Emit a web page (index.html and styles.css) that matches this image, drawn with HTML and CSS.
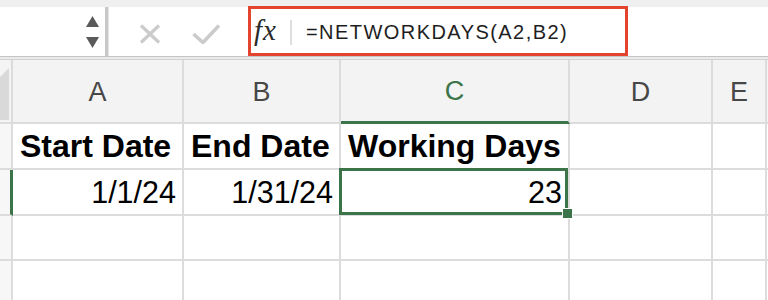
FILE: index.html
```html
<!DOCTYPE html>
<html>
<head>
<meta charset="utf-8">
<link rel="stylesheet" href="styles.css">
</head>
<body>
<div class="toolbar">
  <div class="namebox">
    <div class="spinner">
      <svg class="arrow" width="13" height="11" viewBox="0 0 13 11"><polygon points="6.5,0 13,11 0,11"/></svg>
      <svg class="arrow down" width="13" height="11" viewBox="0 0 13 11"><polygon points="0,0 13,0 6.5,11"/></svg>
    </div>
  </div>
  <div class="gap"></div>
  <div class="formula-area">
    <svg class="icon-x" width="22" height="20" viewBox="0 0 22 20"><path d="M2 1.5 L20 18.5 M20 1.5 L2 18.5"/></svg>
    <svg class="icon-check" width="28" height="20" viewBox="0 0 28 20"><polyline points="1.5,10 11,18.5 27,1.5"/></svg>
    <div class="formula-box">
      <span class="fx">fx</span>
      <span class="divider"></span>
      <span class="formula-text">=NETWORKDAYS(A2,B2)</span>
    </div>
  </div>
</div>
<div class="toolbar-edge"></div>
<div class="sheet">
  <div class="c corner"><svg width="12" height="62" viewBox="0 0 12 62"><polygon points="9,8 9,60 0,60 0,17"/></svg></div>
  <div class="c h">A</div>
  <div class="c h">B</div>
  <div class="c h hsel">C</div>
  <div class="c h">D</div>
  <div class="c h">E</div>
  <div class="c h last"></div>

  <div class="c r"></div>
  <div class="c t bold">Start Date</div>
  <div class="c t bold">End Date</div>
  <div class="c t bold">Working Days</div>
  <div class="c t"></div>
  <div class="c t"></div>
  <div class="c t last"></div>

  <div class="c r rsel"></div>
  <div class="c t num">1/1/24</div>
  <div class="c t num">1/31/24</div>
  <div class="c t num active">23<span class="handle"></span></div>
  <div class="c t"></div>
  <div class="c t"></div>
  <div class="c t last"></div>

  <div class="c r"></div>
  <div class="c t"></div>
  <div class="c t"></div>
  <div class="c t"></div>
  <div class="c t"></div>
  <div class="c t"></div>
  <div class="c t last"></div>

  <div class="c r"></div>
  <div class="c t"></div>
  <div class="c t"></div>
  <div class="c t"></div>
  <div class="c t"></div>
  <div class="c t"></div>
  <div class="c t last"></div>
</div>
</body>
</html>
```
FILE: styles.css
```css
html, body {
  margin: 0;
  padding: 0;
  width: 768px;
  height: 300px;
  overflow: hidden;
  background: #ffffff;
  font-family: "Liberation Sans", Arial, sans-serif;
}

.toolbar {
  display: flex;
  height: 56px;
  box-sizing: border-box;
  padding-top: 7px;
  background: #efefef;
}

.namebox {
  width: 108px;
  background: #ffffff;
  border-right: 3px solid #c8c8c8;
  box-sizing: border-box;
  display: flex;
  justify-content: flex-end;
}

.spinner {
  display: flex;
  flex-direction: column;
  padding-top: 9px;
  padding-right: 6px;
  gap: 10px;
}

.arrow {
  display: block;
  fill: #5a5a5a;
}

.gap {
  width: 4px;
  background: #ffffff;
  border-left: 1px solid #e2e2e2;
  box-sizing: border-box;
}

.formula-area {
  flex: 1;
  background: #ffffff;
  display: flex;
  align-items: flex-start;
}

.icon-x {
  margin-top: 17px;
  margin-left: 27px;
  stroke: #cbcbcb;
  stroke-width: 3.2;
  fill: none;
}

.icon-check {
  margin-top: 17px;
  margin-left: 31px;
  stroke: #cbcbcb;
  stroke-width: 3.6;
  fill: none;
}

.formula-box {
  margin-top: -1px;
  margin-left: 28px;
  width: 380px;
  height: 50px;
  box-sizing: border-box;
  border: 3px solid #e4432d;
  display: flex;
  align-items: center;
}

.fx {
  font-family: "Liberation Serif", "DejaVu Serif", serif;
  font-style: italic;
  font-size: 29px;
  color: #2a2a2a;
  padding-left: 3px;
  letter-spacing: 1px;
  margin-top: -1px;
}

.divider {
  width: 2px;
  height: 25px;
  background: #dedede;
  margin-left: 13px;
  margin-top: 2px;
}

.formula-text {
  margin-left: 14px;
  font-size: 20px;
  letter-spacing: 1.45px;
  color: #1e1e1e;
  margin-top: 2px;
}

.toolbar-edge {
  height: 4px;
  box-sizing: border-box;
  border-top: 1px solid #c4c4c4;
  border-bottom: 1px solid #d0d0d0;
  background: #ebebeb;
}

.sheet {
  display: grid;
  grid-template-columns: 13px 171px 157px 229px 143px 54px 1fr;
  grid-template-rows: 64px 46px 46px 45px 46px;
}

.c {
  box-sizing: border-box;
  border-right: 2px solid #dcdcdc;
  border-bottom: 2px solid #dcdcdc;
}

.c.last {
  border-right: none;
}

.corner {
  background: #f4f4f4;
  overflow: hidden;
}

.corner svg {
  display: block;
  fill: #d9d9d9;
}

.h {
  background: #f3f3f3;
  display: flex;
  align-items: center;
  justify-content: center;
  font-size: 27px;
  color: #474747;
  padding-top: 2px;
}

.h.hsel {
  color: #3b7449;
  border-bottom: 3px solid #3b7449;
}

.r {
  background: #f7f7f7;
}

.r.rsel {
  border-right: 3px solid #3b7449;
}

.t {
  display: flex;
  align-items: center;
  padding: 0 6px 0 7px;
  color: #000000;
  white-space: nowrap;
}

.bold {
  font-weight: bold;
  font-size: 32px;
}

.num {
  justify-content: flex-end;
  font-size: 30.5px;
}

.active {
  position: relative;
}

.active::before {
  content: "";
  position: absolute;
  left: -2px;
  top: -2px;
  right: 0;
  bottom: -1px;
  border: 3px solid #3b7449;
}

.handle {
  position: absolute;
  right: -5px;
  bottom: -5px;
  width: 9px;
  height: 9px;
  background: #3b7449;
  border: 1px solid #ffffff;
  z-index: 2;
}
```
